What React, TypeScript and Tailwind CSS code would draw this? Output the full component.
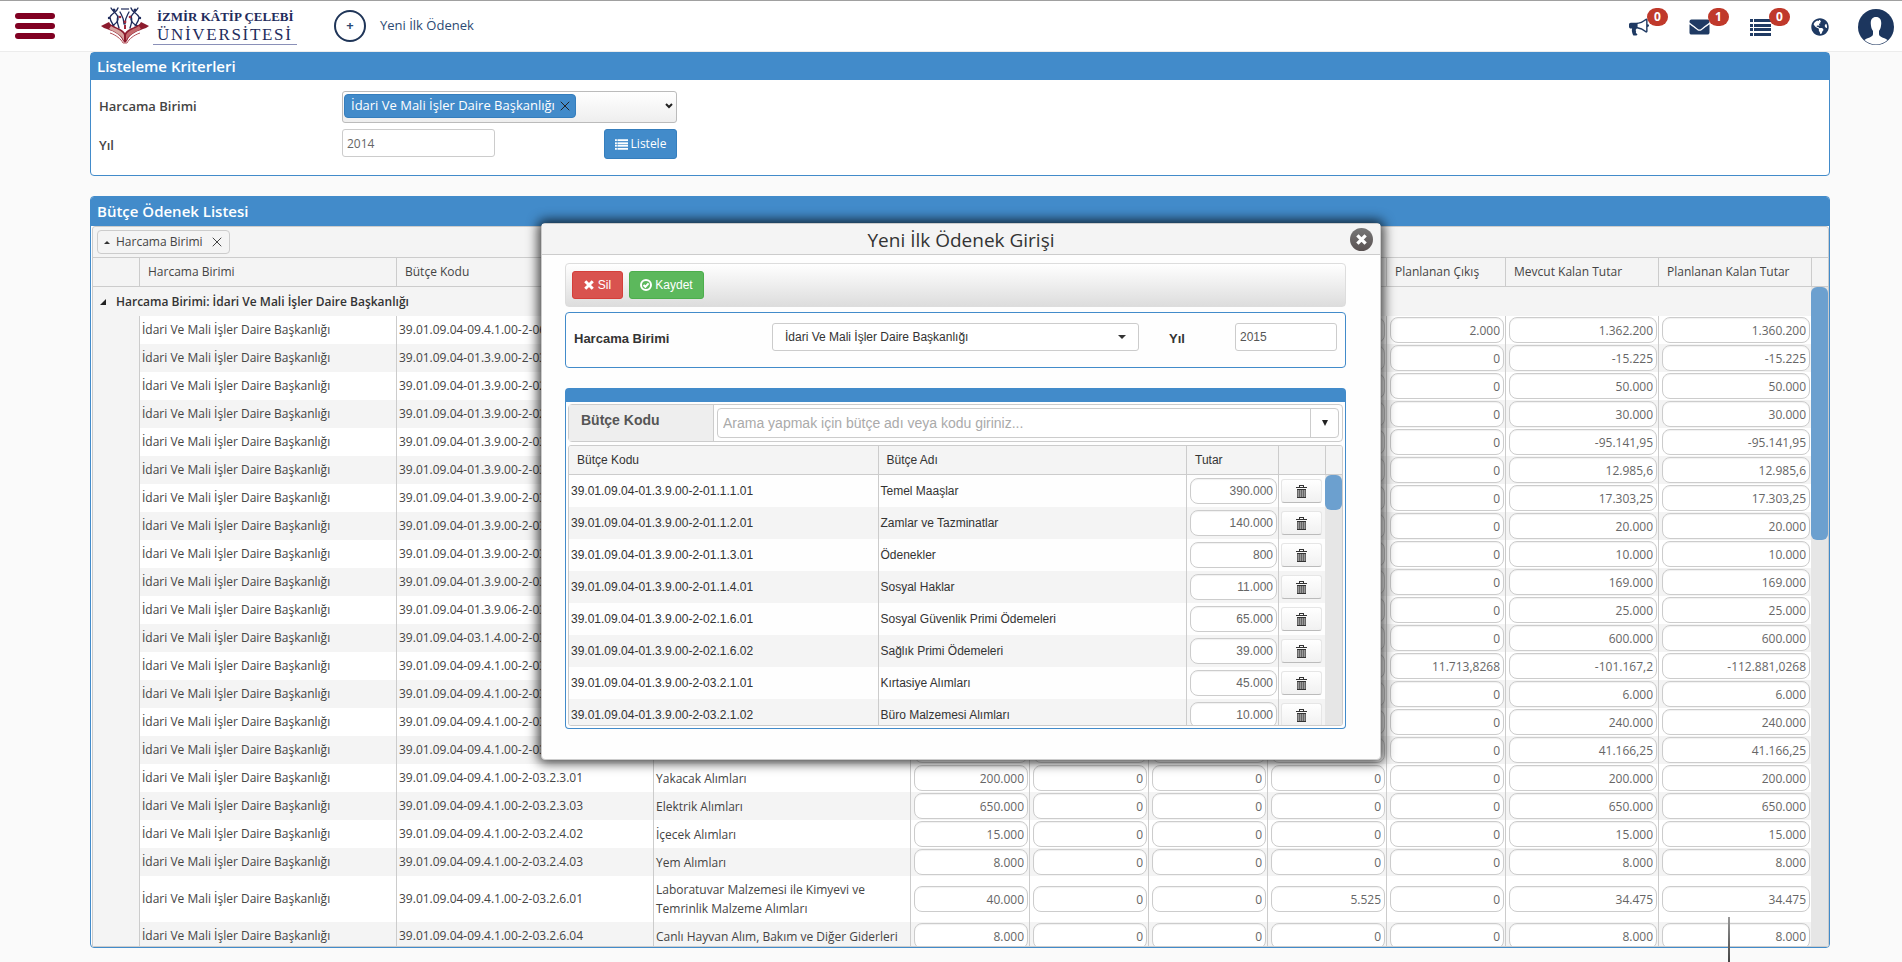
import { useState } from "react";
import { FaEnvelope, FaGlobeAmericas } from "react-icons/fa";
import { X } from "lucide-react";

const BIRIM = "İdari Ve Mali İşler Daire Başkanlığı";

interface Odenek {
  kod: string;
  ad: string;
  tutarlar: string[];
}

const odenekler: Odenek[] = [
  { kod: "39.01.09.04-09.4.1.00-2-06.1.2.01", ad: "Büro Makinaları Alımları", tutarlar: ["1.362.200", "0", "0", "0", "2.000", "1.362.200", "1.360.200"] },
  { kod: "39.01.09.04-01.3.9.00-2-03.5.1.03", ad: "Bilgiye Abonelik Giderleri", tutarlar: ["0", "0", "0", "15.225", "0", "-15.225", "-15.225"] },
  { kod: "39.01.09.04-01.3.9.00-2-02.1.6.01", ad: "Sosyal Güvenlik Primi Ödemeleri", tutarlar: ["50.000", "0", "0", "0", "0", "50.000", "50.000"] },
  { kod: "39.01.09.04-01.3.9.00-2-02.1.6.02", ad: "Sağlık Primi Ödemeleri", tutarlar: ["30.000", "0", "0", "0", "0", "30.000", "30.000"] },
  { kod: "39.01.09.04-01.3.9.00-2-03.2.1.01", ad: "Kırtasiye Alımları", tutarlar: ["0", "0", "0", "95.141,95", "0", "-95.141,95", "-95.141,95"] },
  { kod: "39.01.09.04-01.3.9.00-2-03.2.1.02", ad: "Büro Malzemesi Alımları", tutarlar: ["12.985,6", "0", "0", "0", "0", "12.985,6", "12.985,6"] },
  { kod: "39.01.09.04-01.3.9.00-2-03.2.1.05", ad: "Baskı ve Cilt Giderleri", tutarlar: ["17.303,25", "0", "0", "0", "0", "17.303,25", "17.303,25"] },
  { kod: "39.01.09.04-01.3.9.00-2-03.2.2.01", ad: "Su Alımları", tutarlar: ["20.000", "0", "0", "0", "0", "20.000", "20.000"] },
  { kod: "39.01.09.04-01.3.9.00-2-03.2.2.02", ad: "Temizlik Malzemesi Alımları", tutarlar: ["10.000", "0", "0", "0", "0", "10.000", "10.000"] },
  { kod: "39.01.09.04-01.3.9.00-2-03.2.3.02", ad: "Akaryakıt ve Yağ Alımları", tutarlar: ["169.000", "0", "0", "0", "0", "169.000", "169.000"] },
  { kod: "39.01.09.04-01.3.9.06-2-03.5.9.03", ad: "Kurslara Katılma Giderleri", tutarlar: ["25.000", "0", "0", "0", "0", "25.000", "25.000"] },
  { kod: "39.01.09.04-03.1.4.00-2-03.5.1.09", ad: "Diğer Hizmet Alımları", tutarlar: ["600.000", "0", "0", "0", "0", "600.000", "600.000"] },
  { kod: "39.01.09.04-09.4.1.00-2-03.2.1.01", ad: "Kırtasiye Alımları", tutarlar: ["0", "0", "0", "101.167,2", "11.713,8268", "-101.167,2", "-112.881,0268"] },
  { kod: "39.01.09.04-09.4.1.00-2-03.2.1.05", ad: "Baskı ve Cilt Giderleri", tutarlar: ["6.000", "0", "0", "0", "0", "6.000", "6.000"] },
  { kod: "39.01.09.04-09.4.1.00-2-03.2.2.01", ad: "Su Alımları", tutarlar: ["240.000", "0", "0", "0", "0", "240.000", "240.000"] },
  { kod: "39.01.09.04-09.4.1.00-2-03.2.2.02", ad: "Temizlik Malzemesi Alımları", tutarlar: ["41.166,25", "0", "0", "0", "0", "41.166,25", "41.166,25"] },
  { kod: "39.01.09.04-09.4.1.00-2-03.2.3.01", ad: "Yakacak Alımları", tutarlar: ["200.000", "0", "0", "0", "0", "200.000", "200.000"] },
  { kod: "39.01.09.04-09.4.1.00-2-03.2.3.03", ad: "Elektrik Alımları", tutarlar: ["650.000", "0", "0", "0", "0", "650.000", "650.000"] },
  { kod: "39.01.09.04-09.4.1.00-2-03.2.4.02", ad: "İçecek Alımları", tutarlar: ["15.000", "0", "0", "0", "0", "15.000", "15.000"] },
  { kod: "39.01.09.04-09.4.1.00-2-03.2.4.03", ad: "Yem Alımları", tutarlar: ["8.000", "0", "0", "0", "0", "8.000", "8.000"] },
  { kod: "39.01.09.04-09.4.1.00-2-03.2.6.01", ad: "Laboratuvar Malzemesi ile Kimyevi ve Temrinlik Malzeme Alımları", tutarlar: ["40.000", "0", "0", "5.525", "0", "34.475", "34.475"] },
  { kod: "39.01.09.04-09.4.1.00-2-03.2.6.04", ad: "Canlı Hayvan Alım, Bakım ve Diğer Giderleri", tutarlar: ["8.000", "0", "0", "0", "0", "8.000", "8.000"] },
];

const basliklar = [
  "Harcama Birimi",
  "Bütçe Kodu",
  "Bütçe Adı",
  "Ödenek",
  "Eklenen",
  "Düşülen",
  "Harcanan",
  "Planlanan Çıkış",
  "Mevcut Kalan Tutar",
  "Planlanan Kalan Tutar",
];

const kalemler = [
  { kod: "39.01.09.04-01.3.9.00-2-01.1.1.01", ad: "Temel Maaşlar", tutar: "390.000" },
  { kod: "39.01.09.04-01.3.9.00-2-01.1.2.01", ad: "Zamlar ve Tazminatlar", tutar: "140.000" },
  { kod: "39.01.09.04-01.3.9.00-2-01.1.3.01", ad: "Ödenekler", tutar: "800" },
  { kod: "39.01.09.04-01.3.9.00-2-01.1.4.01", ad: "Sosyal Haklar", tutar: "11.000" },
  { kod: "39.01.09.04-01.3.9.00-2-02.1.6.01", ad: "Sosyal Güvenlik Primi Ödemeleri", tutar: "65.000" },
  { kod: "39.01.09.04-01.3.9.00-2-02.1.6.02", ad: "Sağlık Primi Ödemeleri", tutar: "39.000" },
  { kod: "39.01.09.04-01.3.9.00-2-03.2.1.01", ad: "Kırtasiye Alımları", tutar: "45.000" },
  { kod: "39.01.09.04-01.3.9.00-2-03.2.1.02", ad: "Büro Malzemesi Alımları", tutar: "10.000" },
];

function BullhornIcon({ className }: { className?: string }) {
  return (
    <svg viewBox="0 0 1792 1792" fill="currentColor" className={className}>
      <path d="M1664 640q53 0 90.5 37.5t37.5 90.5-37.5 90.5-90.5 37.5v384q0 52-38 90t-90 38q-417-347-812-380-58 19-91 66t-31 100.5 40 92.5q-20 33-23 65.5t6 58 33.5 55 48 50 61.5 50.5q-29 58-111.5 83t-168.5 11.5-132-55.5q-7-23-29.5-87.5t-32-94.5-23-89-15-101 3.5-98.5 22-110.5h-122q-66 0-113-47t-47-113v-192q0-66 47-113t113-47h480q435 0 896-384 52 0 90 38t38 90v384zm-128 604v-954q-394 302-768 343v270q377 42 768 341z" />
    </svg>
  );
}

function ListIcon({ className }: { className?: string }) {
  return (
    <svg viewBox="0 0 21 17" fill="currentColor" className={className}>
      {[0, 5, 9, 14].map((y) => (
        <g key={y}>
          <rect x="0" y={y} width="3" height="3" />
          <rect x="4" y={y} width="17" height="3" />
        </g>
      ))}
    </svg>
  );
}

function CrossIcon({ className }: { className?: string }) {
  return (
    <svg viewBox="0 0 12 12" fill="none" stroke="currentColor" strokeWidth="3.6" className={className}>
      <path d="M1.500 1.500l9 9M10.500 1.500l-9 9" />
    </svg>
  );
}

function TrashIcon() {
  return (
    <svg viewBox="0 0 11 13" className="h-[13px] w-[11px]" fill="#333" shapeRendering="crispEdges">
      <rect x="3" y="0" width="5" height="1" />
      <rect x="3" y="1" width="1" height="1" />
      <rect x="7" y="1" width="1" height="1" />
      <rect x="0" y="2" width="11" height="1" />
      <rect x="1" y="4" width="9" height="1" />
      <rect x="1" y="5" width="9" height="7" fill="#999" />
      <rect x="1" y="5" width="1" height="7" fill="#666" />
      <rect x="3" y="5" width="1" height="7" fill="#666" />
      <rect x="5" y="5" width="1" height="7" fill="#666" />
      <rect x="7" y="5" width="1" height="7" fill="#666" />
      <rect x="9" y="5" width="1" height="7" fill="#666" />
      <rect x="1" y="12" width="9" height="1" />
    </svg>
  );
}

function CheckCircleIcon() {
  return (
    <svg viewBox="0 0 12 12" className="h-3 w-3" fill="none" stroke="white" strokeWidth="2">
      <circle cx="6" cy="6" r="5" />
      <path d="M3.5 6 5.4 7.8 8.6 4.4" />
    </svg>
  );
}

// Open book with figures rising out of the pages
function Logo() {
  return (
    <svg viewBox="0 0 48 38" className="h-[38px] w-12" fill="none">
      <g stroke="#1f2c5c" strokeWidth="1.3" strokeLinecap="round">
        <path d="M10 1c2 4 6 5 7 9s-3 8-7 9" />
        <path d="M17 1c-1 4-6 5-8 9 0 4 2 6 4 9" />
        <path d="M37 1c-2 4-6 5-7 9s3 8 7 9" />
        <path d="M30 1c1 4 6 5 8 9 0 4-2 6-4 9" />
        <path d="M19 5c2 4 4 6 4 12M28 5c-2 4-4 6-4 12" />
        <path d="M17 9c-2 5 0 8 1 12M30 9c2 5 0 8-1 12" />
      </g>
      <g fill="#1f2c5c">
        <circle cx="13" cy="3" r="1.5" />
        <circle cx="34" cy="3" r="1.5" />
        <circle cx="8" cy="11" r="1.2" />
        <circle cx="39" cy="11" r="1.2" />
        <rect x="20" y="1" width="8" height="2" opacity=".6" />
      </g>
      <g fill="#a3293a">
        <circle cx="19" cy="10" r="1.3" />
        <circle cx="29" cy="10" r="1.3" />
        <circle cx="24" cy="15" r="1.4" />
        <rect x="23" y="18" width="2" height="4" />
      </g>
      <path d="M0 19 8 15c2 5 12 5 16 11 4-6 14-6 16-11l8 4-3 2c-8 3-16 5-19 13l-2 2-2-2C19 26 11 24 3 21z" fill="#8c1b2d" />
      <path d="M10 19c4 3 11 4 13 9v6C21 28 14 25 8 22z" fill="#d8a49f" />
      <path d="M38 19c-4 3-11 4-13 9v6c2-6 9-9 15-12z" fill="#c4696c" />
      <path d="M9 26c6 2 11 6 13 10h4c2-4 7-8 13-10" stroke="#b3525a" strokeWidth="1" />
    </svg>
  );
}

function HeaderIcon({ label, badge, children }: { label: string; badge?: string; children: React.ReactNode }) {
  return (
    <button type="button" aria-label={label} className="relative flex h-[21px] w-[21px] items-center justify-center text-[#1f3a63]">
      {children}
      {badge && (
        <span className="absolute -top-[9px] left-[19px] h-[18px] w-[21px] rounded-full bg-[#c0392b] text-center text-xs leading-[17px] font-bold text-white">
          {badge}
        </span>
      )}
    </button>
  );
}

function Header() {
  return (
    <header className="flex h-[52px] shrink-0 items-center border-t border-b border-t-[#a0a0a0] border-b-[#ececec] bg-white pr-2 pl-[15px]">
      <button type="button" aria-label="Menü" className="flex w-10 flex-col gap-1">
        <span className="h-[6px] rounded-full bg-[#800022]" />
        <span className="h-[6px] rounded-full bg-[#800022]" />
        <span className="h-[6px] rounded-full bg-[#800022]" />
      </button>
      <a href="#" className="ml-[46px] flex items-center gap-1 font-['Liberation_Serif',serif] text-[#1f2c5c]">
        <Logo />
        <span className="flex w-36 flex-col border-b border-[#8a90b8] px-1">
          <span className="text-[13px] leading-[18px] font-bold whitespace-nowrap">İZMİR KÂTİP ÇELEBİ</span>
          <span className="text-[17px] leading-[18px] tracking-widest">ÜNİVERSİTESİ</span>
        </span>
      </a>
      <button type="button" className="ml-[37px] flex items-center gap-[14px] text-[13px] text-[#2c4a73]">
        <span className="flex h-8 w-8 items-center justify-center rounded-full border-2 border-[#1f3558] font-bold">+</span>
        Yeni İlk Ödenek
      </button>
      <nav className="ml-auto flex items-center gap-[38px] pt-[2px]">
        <div className="flex items-center gap-10">
          <HeaderIcon label="Duyurular" badge="0">
            <BullhornIcon className="h-5 w-5" />
          </HeaderIcon>
          <HeaderIcon label="Mesajlar" badge="1">
            <FaEnvelope className="h-5 w-[21px]" />
          </HeaderIcon>
          <HeaderIcon label="Görevler" badge="0">
            <ListIcon className="h-[17px] w-[21px]" />
          </HeaderIcon>
        </div>
        <div className="flex items-center gap-7">
          <HeaderIcon label="Dil">
            <FaGlobeAmericas className="h-[18px] w-[18px]" />
          </HeaderIcon>
          <button type="button" aria-label="Profil">
            <svg viewBox="0 0 36 36" className="h-9 w-9">
              <circle cx="18" cy="18" r="18" fill="#1c365e" />
              <path
                d="M18 8c-4 0-5.500 3-5.200 7 .2 3 .8 5 2.200 7v3c0 3.500-6 3.500-8.500 6A17 17 0 0 0 29.500 31c-2.500-2.500-8.500-2.500-8.500-6v-3c1.400-2 2-4 2.200-7C23.500 11 22 8 18 8z"
                fill="white"
              />
            </svg>
          </button>
        </div>
      </nav>
    </header>
  );
}

function Columns({ withScroll }: { withScroll?: boolean }) {
  return (
    <colgroup>
      <col className="w-[46px]" />
      <col />
      <col />
      <col />
      <col className="w-[119px]" />
      <col className="w-[119px]" />
      <col className="w-[119px]" />
      <col className="w-[119px]" />
      <col className="w-[119px]" />
      <col className="w-[153px]" />
      <col className="w-[153px]" />
      {withScroll && <col className="w-[17px]" />}
    </colgroup>
  );
}

function KalemColumns({ withScroll }: { withScroll?: boolean }) {
  return (
    <colgroup>
      <col />
      <col />
      <col className="w-[92px]" />
      <col className="w-[47px]" />
      {withScroll && <col className="w-[17px]" />}
    </colgroup>
  );
}

const tutarInput =
  "block h-[26px] w-full rounded-lg border border-[#ccc] bg-white px-[3px] text-right text-xs text-[#666] shadow-[inset_0_1px_1px_rgba(0,0,0,0.06)]";

function YeniOdenekModal({ onClose }: { onClose: () => void }) {
  return (
    <div className="pointer-events-none absolute inset-x-0 top-[223px] flex justify-center pl-5">
      <div
        role="dialog"
        aria-labelledby="modal-baslik"
        className="pointer-events-auto w-[840px] rounded-[4px] border border-[#ccc] bg-[#fefefe] font-['Liberation_Sans',Arial,sans-serif] text-xs text-[#444] shadow-[0_0_12px_3px_rgba(0,0,0,0.75)]"
      >
        <div className="relative flex h-[31px] items-center justify-center border-b border-[#ccc] bg-[#f4f4f4]">
          <h2 id="modal-baslik" className="pt-px font-['Open_Sans',sans-serif] text-[19px] leading-6 text-[#333]">
            Yeni İlk Ödenek Girişi
          </h2>
          <button
            type="button"
            aria-label="Kapat"
            onClick={onClose}
            className="absolute top-1 right-[7px] flex h-[23px] w-[23px] items-center justify-center rounded-full bg-gradient-to-b from-[#777] to-[#5a5252] text-white"
          >
            <CrossIcon className="h-[11px] w-[11px]" />
          </button>
        </div>

        <div className="pt-2 pr-[34px] pb-[30px] pl-[23px]">
          <div className="flex h-11 items-center gap-[6px] rounded-[4px] border border-[#ddd] bg-gradient-to-b from-white to-[#ddd] px-[6px]">
            <button type="button" className="flex h-7 w-[51px] items-center justify-center gap-1 rounded-[3px] border border-[#d43f3a] bg-[#d9534f] text-white">
              <CrossIcon className="h-[10px] w-[10px]" />
              Sil
            </button>
            <button type="button" className="flex h-7 w-[75px] items-center justify-center gap-[3px] rounded-[3px] border border-[#4cae4c] bg-[#5cb85c] text-white">
              <CheckCircleIcon />
              Kaydet
            </button>
          </div>

          <div className="mt-[5px] flex h-14 items-start rounded-[4px] border border-[#428bca] px-2 pt-[10px]">
            <label htmlFor="modal-birim" className="w-[198px] text-[13px] leading-8 font-bold text-[#333]">
              Harcama Birimi
            </label>
            <div className="relative flex-1">
              <select id="modal-birim" className="h-7 w-full appearance-none rounded-[3px] border border-[#ccc] bg-white px-3 text-[#333]">
                <option>{BIRIM}</option>
              </select>
              <span className="pointer-events-none absolute top-3 right-[13px] border-x-4 border-t-4 border-x-transparent border-t-[#333]" />
            </div>
            <label htmlFor="modal-yil" className="ml-[30px] w-[66px] text-[13px] leading-8 font-bold text-[#333]">
              Yıl
            </label>
            <input id="modal-yil" defaultValue="2015" className="h-7 w-[102px] rounded-[3px] border border-[#ccc] bg-white px-1 text-[#555]" />
          </div>

          <div className="mt-5 rounded-[4px] border border-t-[14px] border-[#428bca] p-[2px]">
            <div className="flex h-[38px] rounded-[4px] border border-[#ccc]">
              <label htmlFor="butce-ara" className="w-[145px] border-r border-[#ccc] bg-[#eee] pl-3 text-sm leading-[30px] font-bold text-[#555]">
                Bütçe Kodu
              </label>
              <div className="m-[3px] flex flex-1 rounded-[4px] border border-[#ccc] bg-white">
                <input id="butce-ara" placeholder="Arama yapmak için bütçe adı veya kodu giriniz..." className="min-w-0 flex-1 px-[5px] text-sm placeholder:text-[#aaa]" />
                <button type="button" aria-label="Listeyi aç" className="flex w-7 items-center justify-center border-l border-[#ccc]">
                  <span className="border-x-[3px] border-t-[6px] border-x-transparent border-t-[#222]" />
                </button>
              </div>
            </div>

            <div className="mt-[3px] overflow-hidden rounded-[3px] border border-[#ccc]">
              <div className="border-b border-[#ccc] bg-[#f4f4f4]">
                <table className="w-full table-fixed border-separate border-spacing-0 text-left text-[#333]">
                  <KalemColumns withScroll />
                  <thead>
                    <tr className="h-7">
                      <th className="px-2 py-0 font-normal">Bütçe Kodu</th>
                      <th className="border-l border-[#ccc] px-2 py-0 font-normal">Bütçe Adı</th>
                      <th className="border-l border-[#ccc] px-2 py-0 font-normal">Tutar</th>
                      <th className="border-l border-[#ccc] p-0" />
                      <th className="border-l border-[#ccc] p-0" />
                    </tr>
                  </thead>
                </table>
              </div>
              <div className="flex h-[250px] overflow-hidden">
                <div className="min-w-0 flex-1">
                  <table className="w-full table-fixed border-separate border-spacing-0 text-[#333]">
                    <KalemColumns />
                    <tbody>
                      {kalemler.map((kalem) => (
                        <tr key={kalem.kod} className="h-8 even:bg-[#f4f4f4]">
                          <td className="px-[2px] py-0">{kalem.kod}</td>
                          <td className="border-l border-[#ccc] px-[2px] py-0">{kalem.ad}</td>
                          <td className="border-l border-[#ccc] py-[3px] pr-px pl-[3px]">
                            <input aria-label={`${kalem.ad} tutarı`} defaultValue={kalem.tutar} className={tutarInput} />
                          </td>
                          <td className="border-l border-[#ccc] px-[2px] py-0">
                            <button
                              type="button"
                              aria-label={`${kalem.ad} sil`}
                              className="flex h-6 w-[41px] items-center justify-center rounded-[3px] border border-[#e6e6e6] border-b-[#bbb] bg-gradient-to-b from-white to-[#f1f1f1]"
                            >
                              <TrashIcon />
                            </button>
                          </td>
                        </tr>
                      ))}
                    </tbody>
                  </table>
                </div>
                <div className="w-[17px] bg-[#e6e6e6]">
                  <div className="h-[35px] rounded-md bg-[#6ca0cf]" />
                </div>
              </div>
            </div>
          </div>
        </div>
      </div>
    </div>
  );
}

export default function App() {
  const [modalOpen, setModalOpen] = useState(true);

  return (
    <div className="relative flex h-screen flex-col overflow-hidden bg-[#fafafa] font-['Open_Sans',sans-serif] text-xs text-[#444]">
      <Header />

      <main className="flex min-h-0 flex-1 flex-col pr-[72px] pb-[14px] pl-[90px]">
        {/* Filtre */}
        <section className="shrink-0 rounded-[4px] border border-[#428bca] bg-white">
          <h2 className="bg-[#428bca] px-[6px] text-[15px] leading-[27px] font-semibold text-white">Listeleme Kriterleri</h2>
          <div className="flex flex-col gap-[6px] px-2 pt-[11px] pb-[14px]">
            <div className="flex items-center">
              <label htmlFor="birim" className="w-[243px] text-[13px] font-semibold text-[#444]">
                Harcama Birimi
              </label>
              <div className="relative w-[335px]">
                <select id="birim" className="block h-8 w-full appearance-none rounded-[3px] border border-[#bbb] bg-gradient-to-b from-white to-[#eee]" />
                <svg viewBox="0 0 8 6" className="pointer-events-none absolute top-3 right-1 h-[6px] w-2" fill="none" stroke="#222" strokeWidth="2">
                  <path d="M1 1l3 3 3-3" />
                </svg>
                <span className="absolute top-[3px] left-[2px] flex h-6 items-center gap-[2px] rounded-[4px] border border-[#357ebd] bg-[#428bca] pr-[2px] pl-[6px] text-[13px] text-white">
                  {BIRIM}
                  <button type="button" aria-label="Kaldır" className="text-[#222]">
                    <X className="h-4 w-4" strokeWidth={1.5} />
                  </button>
                </span>
              </div>
            </div>
            <div className="flex items-start">
              <label htmlFor="yil" className="w-[243px] text-[13px] leading-8 font-semibold text-[#444]">
                Yıl
              </label>
              <div className="flex w-[335px] items-start justify-between">
                <input id="yil" defaultValue="2014" className="h-7 w-[153px] rounded-[3px] border border-[#ccc] bg-white px-1 text-[#666]" />
                <button type="button" className="flex h-[30px] w-[73px] items-center justify-center gap-[3px] rounded-[3px] border border-[#357ebd] bg-[#428bca] text-white">
                  <ListIcon className="h-[11px] w-[13px]" />
                  Listele
                </button>
              </div>
            </div>
          </div>
        </section>

        {/* Liste */}
        <section className="mt-5 flex min-h-0 flex-1 flex-col overflow-hidden rounded-[4px] border border-[#428bca] bg-white">
          <h2 className="bg-[#428bca] px-[6px] text-[15px] leading-[29px] font-semibold text-white">Bütçe Ödenek Listesi</h2>
          <div className="ml-px flex min-h-0 flex-1 flex-col rounded-t-[3px] border border-[#ccc] bg-[#f4f4f4]">
            <div className="flex h-[30px] items-center px-1">
              <span className="flex h-6 items-center gap-[6px] rounded-[4px] border border-[#ccc] pr-1 pl-[6px]">
                <span className="border-x-[3px] border-b-[3px] border-x-transparent border-b-[#333]" />
                Harcama Birimi
                <button type="button" aria-label="Gruplamayı kaldır">
                  <X className="h-4 w-4" strokeWidth={1.5} />
                </button>
              </span>
            </div>
            <div className="border-y border-[#ccc]">
              <table className="w-full table-fixed border-separate border-spacing-0 text-left">
                <Columns withScroll />
                <thead>
                  <tr className="h-7">
                    <th className="p-0" />
                    {basliklar.map((baslik) => (
                      <th key={baslik} className="border-l border-[#ccc] px-2 py-0 font-normal">
                        {baslik}
                      </th>
                    ))}
                    <th className="border-l border-[#ccc] p-0" />
                  </tr>
                </thead>
              </table>
            </div>
            <div className="flex min-h-0 flex-1 overflow-hidden">
              <div className="min-w-0 flex-1">
                <table className="w-full table-fixed border-separate border-spacing-0">
                  <Columns />
                  <tbody>
                    <tr className="h-[29px]">
                      <td colSpan={11} className="py-0 pr-0 pl-[7px] text-[#333]">
                        <span className="flex items-center gap-[10px] font-semibold">
                          <svg viewBox="0 0 6 6" className="h-[6px] w-[6px]">
                            <path d="M6 0v6H0z" fill="#222" />
                          </svg>
                          Harcama Birimi: {BIRIM}
                        </span>
                      </td>
                    </tr>
                    {odenekler.map((odenek) => (
                      <tr key={odenek.kod} className="group h-7">
                        <td className="bg-[#f4f4f4] p-0" />
                        <td className="border-l border-[#ccc] bg-white px-[2px] py-0 group-odd:bg-[#f4f4f4]">{BIRIM}</td>
                        <td className="border-l border-[#ccc] bg-white px-[2px] py-0 group-odd:bg-[#f4f4f4]">{odenek.kod}</td>
                        <td className="border-l border-[#ccc] bg-white px-[2px] py-1 leading-[19px] group-odd:bg-[#f4f4f4]">{odenek.ad}</td>
                        {odenek.tutarlar.map((tutar, i) => (
                          <td key={i} className="border-l border-[#ccc] bg-white py-px pr-px pl-[3px] group-odd:bg-[#f4f4f4]">
                            <input aria-label={basliklar[i + 3]} defaultValue={tutar} className={tutarInput} />
                          </td>
                        ))}
                      </tr>
                    ))}
                  </tbody>
                </table>
              </div>
              <div className="w-[17px] bg-[#e6e6e6]">
                <div className="h-[253px] rounded-md bg-[#6ca0cf]" />
              </div>
            </div>
          </div>
        </section>
      </main>

      {modalOpen && <YeniOdenekModal onClose={() => setModalOpen(false)} />}

      <div className="absolute right-[172px] bottom-0 h-[45px] w-[2px] bg-gradient-to-b from-[#999] to-[#444]" />
    </div>
  );
}
